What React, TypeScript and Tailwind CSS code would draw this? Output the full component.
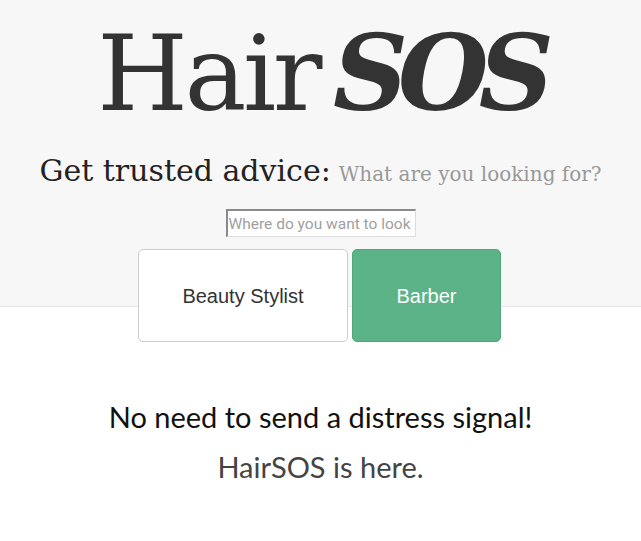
import React from "react";

export default function App() {
  return (
    <div className="min-h-[541px] w-full bg-white">
      <div className="bg-[#f7f7f7] border-b border-[#e8e8e8] flex flex-col items-center h-[307px]">
        <h1
          className="shrink-0 mt-[16px] text-[#333333] text-[104px] leading-[116px] flex items-baseline"
          style={{ fontFamily: '"DejaVu Serif", serif' }}
        >
          <span className="font-normal tracking-[-3.5px]">Hair</span>
          <span className="font-bold italic ml-[14px] tracking-[-10px]">SOS</span>
        </h1>
        <div className="shrink-0 mt-[16px] flex items-baseline h-[40px]" style={{ fontFamily: '"DejaVu Serif", serif' }}>
          <span className="text-[30px] text-[#222222]">Get trusted advice:</span>
          <span className="ml-[8px] text-[20px] text-[#999999]">What are you looking for?</span>
        </div>
        <div className="shrink-0 mt-[21px] w-[190px] h-[28px] flex bg-white border-t-2 border-l-2 border-r border-b border-t-[#8a8a8a] border-l-[#8a8a8a] border-r-[#dddddd] border-b-[#dddddd]">
          <input
            className="w-full h-full bg-transparent px-[1px] text-[15.5px] outline-none placeholder:text-[#a0a0a0]"
            style={{ fontFamily: '"Liberation Sans Narrow", "Roboto", sans-serif' }}
            placeholder="Where do you want to look"
          />
        </div>
        <div className="shrink-0 mt-[12px] flex gap-[4px] relative z-10 -translate-x-[1px]">
          <button
            className="w-[210px] h-[93px] bg-white border border-[#cccccc] rounded-[5px] text-[20px] text-[#333333]"
            style={{ fontFamily: '"Liberation Sans", Arial, sans-serif' }}
          >
            Beauty Stylist
          </button>
          <button
            className="w-[149px] h-[93px] bg-[#5cb387] border border-[#52a67b] rounded-[5px] text-[20px] text-white"
            style={{ fontFamily: '"Liberation Sans", Arial, sans-serif' }}
          >
            Barber
          </button>
        </div>
      </div>
      <div className="flex flex-col items-center mt-[85px]" style={{ fontFamily: 'Lato, sans-serif' }}>
        <p className="text-[29px] leading-[50px] text-[#111111]">No need to send a distress signal!</p>
        <p className="text-[29px] leading-[50px] text-[#444444]">HairSOS is here.</p>
      </div>
    </div>
  );
}
